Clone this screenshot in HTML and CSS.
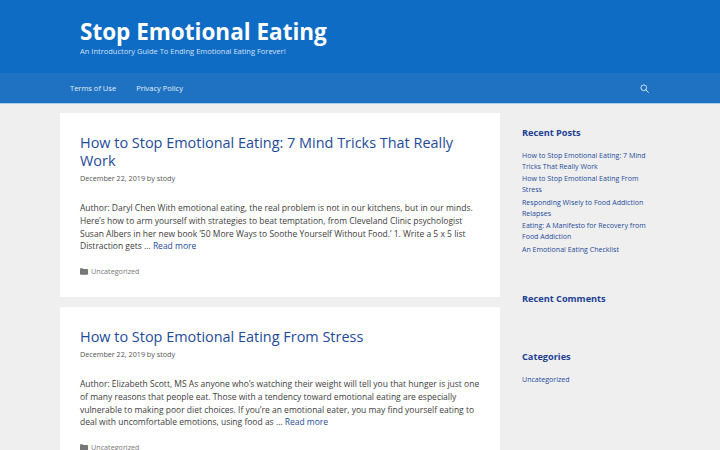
FILE: index.html
```html
<!DOCTYPE html>
<html lang="en">
<head>
<meta charset="utf-8">
<title>Stop Emotional Eating</title>
<link rel="stylesheet" href="styles.css">
</head>
<body>
<header class="site-header">
  <div class="brand">
    <p class="site-title">Stop Emotional Eating</p>
    <p class="tagline">An Introductory Guide To Ending Emotional Eating Forever!</p>
  </div>
</header>
<nav class="nav">
  <div class="nav-inner">
    <ul class="menu">
      <li>Terms of Use</li>
      <li>Privacy Policy</li>
    </ul>
    <svg class="search" viewBox="0 0 12 12" width="9" height="9" aria-hidden="true"><circle cx="5" cy="5" r="3.8" fill="none" stroke="currentColor" stroke-width="1.200"/><path d="M7.8 7.8 11.2 11.2" stroke="currentColor" stroke-width="1.300" stroke-linecap="round"/></svg>
  </div>
</nav>
<div class="container">
  <main class="content">
    <article class="card">
      <h2 class="post-title">How to Stop Emotional Eating: 7 Mind Tricks That Really Work</h2>
      <p class="meta">December 22, 2019 by stody</p>
      <p class="summary">Author: Daryl Chen With emotional eating, the real problem is not in our kitchens, but in our minds. Here’s how to arm yourself with strategies to beat temptation, from Cleveland Clinic psychologist Susan Albers in her new book ’50 More Ways to Soothe Yourself Without Food.’ 1. Write a 5 x 5 list Distraction gets … <a class="more">Read more</a></p>
      <p class="cat"><svg class="folder" viewBox="0 0 12 10" width="8" height="7" aria-hidden="true"><path d="M0 1.2C0 .5.5 0 1.2 0h2.6l1.2 1.300h5.800c.7 0 1.2.5 1.2 1.2v6.300c0 .7-.5 1.2-1.2 1.2H1.2C.5 10 0 9.500 0 8.800Z" fill="currentColor"/></svg>Uncategorized</p>
    </article>
    <article class="card">
      <h2 class="post-title">How to Stop Emotional Eating From Stress</h2>
      <p class="meta">December 22, 2019 by stody</p>
      <p class="summary">Author: Elizabeth Scott, MS As anyone who’s watching their weight will tell you that hunger is just one of many reasons that people eat. Those with a tendency toward emotional eating are especially vulnerable to making poor diet choices. If you’re an emotional eater, you may find yourself eating to deal with uncomfortable emotions, using food as … <a class="more">Read more</a></p>
      <p class="cat"><svg class="folder" viewBox="0 0 12 10" width="8" height="7" aria-hidden="true"><path d="M0 1.2C0 .5.5 0 1.2 0h2.6l1.2 1.300h5.800c.7 0 1.2.5 1.2 1.2v6.300c0 .7-.5 1.2-1.2 1.2H1.2C.5 10 0 9.500 0 8.800Z" fill="currentColor"/></svg>Uncategorized</p>
    </article>
  </main>
  <aside class="sidebar">
    <section class="widget w-posts">
      <h3 class="widget-title">Recent Posts</h3>
      <ul class="links">
        <li>How to Stop Emotional Eating: 7 Mind Tricks That Really Work</li>
        <li>How to Stop Emotional Eating From Stress</li>
        <li>Responding Wisely to Food Addiction Relapses</li>
        <li>Eating: A Manifesto for Recovery from Food Addiction</li>
        <li>An Emotional Eating Checklist</li>
      </ul>
    </section>
    <section class="widget w-comments">
      <h3 class="widget-title">Recent Comments</h3>
    </section>
    <section class="widget">
      <h3 class="widget-title">Categories</h3>
      <ul class="links">
        <li>Uncategorized</li>
      </ul>
    </section>
  </aside>
</div>
</body>
</html>
```
FILE: styles.css
```css
* { box-sizing: border-box; }
html, body { margin: 0; padding: 0; height: 450px; overflow: hidden; }
body { background: #efefef; font-family: "Open Sans", "Noto Sans", sans-serif; color: #3a3a3a; }
p, h2, h3, ul { margin: 0; padding: 0; }
ul { list-style: none; }

.site-header { background: #0f6cc4; height: 73px; color: #fff; padding: 17px 80px 0; }
.site-title { font-size: 22.500px; font-weight: 700; line-height: 29px; }
.tagline { font-size: 7.500px; line-height: 10px; color: #cfe1f4; }

.nav { background: #1f72c1; height: 31px; border-bottom: 1px solid #a9cdeb; color: #e3eef9; }
.nav-inner { display: flex; justify-content: space-between; align-items: center; height: 30px; margin: 0 71px 0 70px; }
.menu { display: flex; gap: 20px; font-size: 7.500px; }
.search { color: #e3eef9; }

.container { display: flex; padding: 9px 60px 0; align-items: flex-start; }
.content { width: 440px; flex: none; display: flex; flex-direction: column; gap: 10px; }
.card { background: #fff; padding: 20px; height: 184px; }
.card + .card { height: 200px; }
.post-title { font-size: 14.450px; font-weight: 400; line-height: 18px; color: #1e4a9a; padding-top: 1px; }
.meta { font-size: 7.200px; line-height: 11px; margin-top: 3px; color: #555; }
.summary { font-size: 8.500px; line-height: 12.750px; margin-top: 18px; color: #3d3d3d; }
.more { color: #1e4a9a; }
.cat { display: flex; align-items: center; gap: 3px; margin-top: 13px; font-size: 7.200px; line-height: 11px; color: #777; }

.sidebar { flex: 1; padding: 10px 0 0 22px; }
.w-posts { height: 166px; }
.w-comments { height: 58px; }
.widget-title { font-size: 9.200px; font-weight: 700; line-height: 14px; color: #1e3f94; padding-top: 3px; height: 20px; }
.links { margin-top: 6.500px; font-size: 7.050px; line-height: 11px; color: #1e4a9a; }
.links li { margin-bottom: 1.500px; }
```
